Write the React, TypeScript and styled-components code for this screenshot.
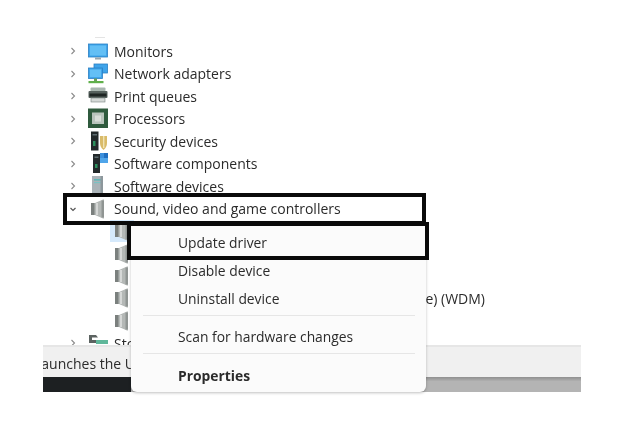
import React from "react";
import styled, { createGlobalStyle } from "styled-components";

const GlobalStyle = createGlobalStyle`
  html, body {
    margin: 0;
    padding: 0;
    background: #fff;
  }
  body {
    font-family: "Open Sans", "Noto Sans", sans-serif;
    color: #2b2b2b;
  }
`;

const Page = styled.div`
  position: relative;
  width: 617px;
  height: 427px;
  overflow: hidden;
  background: #fff;
  padding: 37px 36px 0 43px;
  box-sizing: border-box;
  display: flex;
  flex-direction: column;
  filter: blur(0.35px);
`;

const Tree = styled.div`
  height: 308px;
  overflow: hidden;
  display: flex;
  flex-direction: column;
`;

// bottom edge of the row scrolled out above Monitors
const ClippedEdge = styled.div`
  width: 10px;
  height: 1px;
  flex: none;
  margin: 0 0 2px 52px;
  background: #e4e4e4;
`;

const Row = styled.div`
  position: relative;
  height: 22.5px;
  flex: none;
  display: flex;
  align-items: center;
  padding-left: 25px;
  font-size: 14px;
  white-space: nowrap;
`;

const Chevron = styled.svg`
  width: 10px;
  height: 10px;
  flex: none;
  margin-right: 8px;
`;

const IconBox = styled.svg`
  width: 24px;
  height: 22px;
  flex: none;
  margin-right: 4px;
  overflow: visible;
`;

const SubRow = styled.div`
  height: 22.4px;
  flex: none;
  display: flex;
  align-items: center;
  padding-left: 67px;
  font-size: 14px;
  white-space: nowrap;
`;

const SubIconBox = styled.div<{ $selected?: boolean }>`
  width: 24px;
  height: 100%;
  flex: none;
  display: flex;
  align-items: center;
  background: ${(p) => (p.$selected ? "#d6eafc" : "transparent")};
`;

const SubLabel = styled.span`
  width: 348px;
  flex: none;
  margin-left: 3px;
  text-align: right;
`;

const RowFrame = styled.div`
  position: absolute;
  left: 20px;
  top: -4.5px;
  width: 363px;
  height: 32px;
  box-sizing: border-box;
  border: 4px solid #0a0a0a;
`;

const StatusBar = styled.div`
  width: 538px;
  height: 32px;
  flex: none;
  box-sizing: border-box;
  background: #f0f0f0;
  border-top: 2px solid #e6e6e6;
  padding-top: 3px;
  overflow: hidden;
  display: flex;
  align-items: center;
  font-size: 14px;
  white-space: nowrap;
`;

const StatusText = styled.span`
  margin-left: -9px;
`;

const BottomEdge = styled.div`
  width: 538px;
  height: 15px;
  flex: none;
  background: linear-gradient(#8f8f8f, #b4b4b4 30%);
`;

const DarkEdge = styled.div`
  width: 88px;
  height: 100%;
  background: #1d2022;
`;

const Menu = styled.div`
  position: absolute;
  left: 131px;
  top: 222px;
  width: 295px;
  height: 170px;
  box-sizing: border-box;
  background: #fbfbfb;
  border-radius: 0 0 6px 6px;
  box-shadow: 0 1px 3px rgba(0, 0, 0, 0.25);
  display: flex;
  flex-direction: column;
  padding: 6px 4px 0;
`;

const MenuItem = styled.div<{ $bold?: boolean; $height: number; $top?: number; $bottom?: number }>`
  height: ${(p) => p.$height}px;
  flex: none;
  box-sizing: border-box;
  display: flex;
  align-items: center;
  padding: ${(p) => p.$top ?? 0}px 0 ${(p) => p.$bottom ?? 0}px 43px;
  font-size: 13.85px;
  font-weight: ${(p) => (p.$bold ? 700 : 400)};
`;

const Separator = styled.div`
  height: 1px;
  flex: none;
  margin: 0 7px 0 8px;
  background: #e6e6e6;
`;

const MenuFrame = styled.div`
  position: absolute;
  left: 127px;
  top: 222px;
  width: 302px;
  height: 38px;
  box-sizing: border-box;
  border: 4px solid #0a0a0a;
`;

const ChevronRight = () => (
  <Chevron viewBox="0 0 10 10">
    <path d="M3.5 2 L6.5 5 L3.5 8" fill="none" stroke="#8a8a8a" strokeWidth="1.1" />
  </Chevron>
);

const ChevronDown = () => (
  <Chevron viewBox="0 0 10 10">
    <path d="M2.5 4 L5 6.5 L7.5 4" fill="none" stroke="#555" strokeWidth="1.2" />
  </Chevron>
);

const Screen = ({ x, y, w, h }: { x: number; y: number; w: number; h: number }) => (
  <rect x={x} y={y} width={w} height={h} fill="#3fa4ea" stroke="#2a7fc4" strokeWidth="0.8" />
);

const MonitorIcon = () => (
  <IconBox viewBox="0 0 24 22">
    <Screen x={2.5} y={4} w={19} h={13} />
    <rect x="4" y="5.5" width="16" height="10" fill="#63bff5" />
    <rect x="9" y="17.5" width="6" height="2" fill="#9aa6ad" />
  </IconBox>
);

const NetworkIcon = () => (
  <IconBox viewBox="0 0 24 22">
    <Screen x={8} y={1} w={13.5} h={9} />
    <Screen x={2.5} y={5} w={14} h={10.5} />
    <rect x="4" y="6.5" width="11" height="7.5" fill="#63bff5" />
    <rect x="8" y="15.5" width="3" height="2.5" fill="#6b9e5e" />
    <rect x="2.5" y="18" width="15" height="2.2" fill="#5fb04a" />
  </IconBox>
);

const PrinterIcon = () => (
  <IconBox viewBox="0 0 24 22">
    <rect x="4.5" y="2.5" width="15" height="4" rx="1" fill="#a9b6b0" />
    <rect x="2.5" y="6" width="19" height="7" rx="1" fill="#55605c" />
    <rect x="3.5" y="8.5" width="17" height="3" fill="#1e2523" />
    <rect x="5" y="13" width="14" height="4" fill="#d5d9d7" stroke="#7a8480" strokeWidth="0.6" />
  </IconBox>
);

const ProcessorIcon = () => (
  <IconBox viewBox="0 0 24 22">
    <rect x="2" y="0.5" width="20" height="19.5" fill="#2f5a3d" />
    <rect x="6" y="4.5" width="12" height="11.5" fill="#b9c4bc" />
    <rect x="9" y="7.5" width="6" height="6" fill="#d9ded9" />
  </IconBox>
);

const SecurityIcon = () => (
  <IconBox viewBox="0 0 24 22">
    <rect x="5" y="1.5" width="7.5" height="19" fill="#23292b" />
    <rect x="6.5" y="4" width="4.5" height="1.5" fill="#5d6c70" />
    <rect x="7" y="11" width="2.5" height="5" fill="#2c8f5e" />
    <path d="M14 6 h7 v7 q0 4 -3.5 7 q-3.5 -3 -3.5 -7 z" fill="#d9bb6a" />
    <rect x="17" y="6" width="1.4" height="12" fill="#f0e3b5" />
  </IconBox>
);

const ComponentsIcon = () => (
  <IconBox viewBox="0 0 24 22">
    <rect x="7" y="1" width="7" height="19" fill="#23292b" />
    <rect x="8.5" y="3.5" width="4" height="1.5" fill="#5d6c70" />
    <rect x="9" y="11" width="2.5" height="4" fill="#2c8f5e" />
    <rect x="14" y="0" width="4" height="5" fill="#3b8fdc" />
    <rect x="18" y="0" width="4" height="5" fill="#1f6fc0" />
    <rect x="14" y="5" width="8" height="5" fill="#4fa5ea" />
  </IconBox>
);

const SoftwareDeviceIcon = () => (
  <IconBox viewBox="0 0 24 22">
    <rect x="6" y="1" width="11" height="19" fill="#aab3b8" />
    <rect x="8" y="4" width="7" height="1.6" fill="#5fb6b8" />
    <rect x="8" y="7" width="7" height="1.2" fill="#7cc2c4" />
    <rect x="14.5" y="1" width="2.5" height="19" fill="#8d979c" />
  </IconBox>
);

const SpeakerIcon = () => (
  <IconBox viewBox="0 0 24 22">
    <path d="M5 5 h4 L17 1.5 h1 V20.5 h-1 L9 17 H5 z" fill="#b4b8b6" />
    <rect x="10" y="5" width="2" height="12" fill="#d6d8d7" />
    <rect x="15.5" y="2.5" width="2.5" height="17" fill="#909593" />
    <rect x="5" y="5" width="3.5" height="12" fill="#7b807e" />
  </IconBox>
);

const StorageIcon = () => (
  <IconBox viewBox="0 0 24 22">
    <path d="M3 3 h7 l2 2.5 h-6 v2.5 h6 v3 H3 z" fill="#5c6361" />
    <rect x="10" y="8" width="12" height="4" fill="#5fb79a" />
  </IconBox>
);

const categories = [
  { label: "Monitors", icon: <MonitorIcon /> },
  { label: "Network adapters", icon: <NetworkIcon /> },
  { label: "Print queues", icon: <PrinterIcon /> },
  { label: "Processors", icon: <ProcessorIcon /> },
  { label: "Security devices", icon: <SecurityIcon /> },
  { label: "Software components", icon: <ComponentsIcon /> },
  { label: "Software devices", icon: <SoftwareDeviceIcon /> },
];

const audioDevices = ["", "", "", "Realtek Audio Device (Realtek Device) (WDM)", ""];

export default function App() {
  return (
    <>
      <GlobalStyle />
      <Page>
        <Tree>
          <ClippedEdge />
          {categories.map((c) => (
            <Row key={c.label}>
              <ChevronRight />
              {c.icon}
              <span>{c.label}</span>
            </Row>
          ))}
          <Row>
            <ChevronDown />
            <SpeakerIcon />
            <span>Sound, video and game controllers</span>
            <RowFrame />
          </Row>
          {audioDevices.map((name, i) => (
            <SubRow key={i}>
              <SubIconBox $selected={i === 0}>
                <SpeakerIcon />
              </SubIconBox>
              {name && <SubLabel>{name}</SubLabel>}
            </SubRow>
          ))}
          <Row>
            <ChevronRight />
            <StorageIcon />
            <span>Storage controllers</span>
          </Row>
        </Tree>
        <StatusBar>
          <StatusText>Launches the Update Driver Wizard for the selected device.</StatusText>
        </StatusBar>
        <BottomEdge>
          <DarkEdge />
        </BottomEdge>
        <Menu>
          <MenuItem $height={28}>Update driver</MenuItem>
          <MenuItem $height={28}>Disable device</MenuItem>
          <MenuItem $height={31} $bottom={3}>
            Uninstall device
          </MenuItem>
          <Separator />
          <MenuItem $height={37} $top={4}>
            Scan for hardware changes
          </MenuItem>
          <Separator />
          <MenuItem $height={38} $top={5} $bold>
            Properties
          </MenuItem>
        </Menu>
        <MenuFrame />
      </Page>
    </>
  );
}
